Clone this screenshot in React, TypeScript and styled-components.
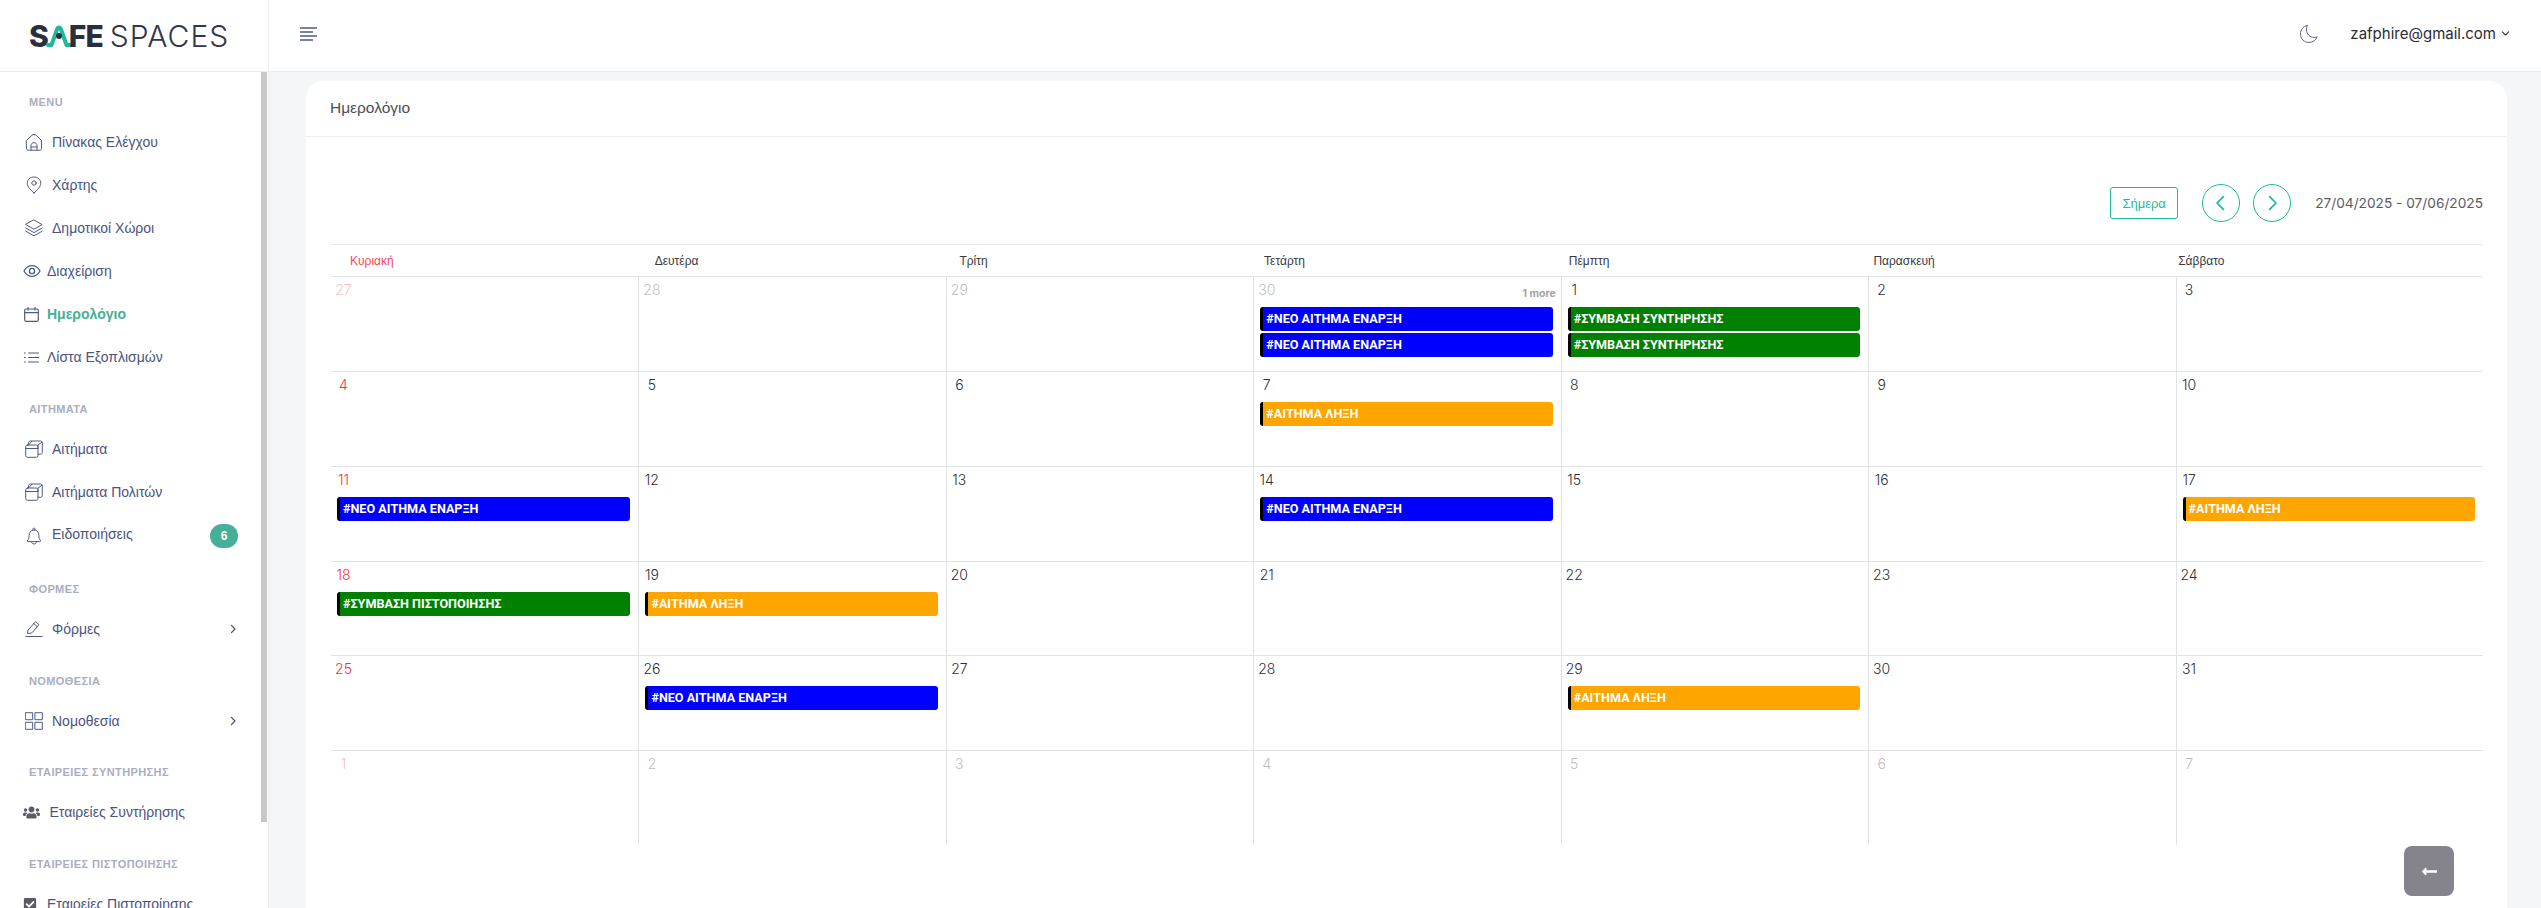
import React from "react";
import styled, { createGlobalStyle } from "styled-components";
import { FaUsers, FaCheckSquare, FaLongArrowAltLeft } from "react-icons/fa";

const Global = createGlobalStyle`
  html, body { margin: 0; padding: 0; height: 100%; overflow: hidden; background: #f5f6f8; }
  * { box-sizing: border-box; }
  #root { height: 100%; }
`;

const Page = styled.div`
  display: grid;
  grid-template-columns: 269px 1fr;
  height: 908px;
  overflow: hidden;
  font-family: "Liberation Sans", Arial, sans-serif;
`;

const Sidebar = styled.aside`
  position: relative;
  background: #fff;
  border-right: 1px solid #eceef2;
  height: 908px;
  overflow: hidden;
`;

const LogoBar = styled.div`
  height: 72px;
  border-bottom: 1px solid #e9ebef;
  display: flex;
  align-items: center;
  padding-left: 29px;
`;

const LogoBold = styled.span`
  font-family: Inter, sans-serif;
  font-weight: 800;
  font-size: 30px;
  line-height: 30px;
  color: #2b2e3f;
  letter-spacing: -1px;
`;

const LogoLight = styled.span`
  font-family: Inter, sans-serif;
  font-weight: 300;
  font-size: 30px;
  line-height: 30px;
  letter-spacing: 1px;
  color: #33364a;
  margin-left: 7px;
`;

const LogoMark = styled.svg`
  width: 28px;
  height: 25px;
  margin: -3px -4px 0 -3px;
  flex: none;
`;

const ScrollThumb = styled.div`
  position: absolute;
  top: 72px;
  right: 1px;
  width: 6px;
  height: 750px;
  background: #c8c8c8;
`;

const Nav = styled.nav`
  padding-top: 21px;
`;

const Section = styled.div`
  font-size: 11px;
  line-height: 18px;
  height: 18px;
  padding-left: 29px;
  color: #a9aebf;
  font-weight: 700;
  letter-spacing: 0.4px;
  margin-bottom: 9.5px;
  white-space: nowrap;
  & ~ & { margin-top: 21px; }
`;

const Item = styled.div<{ $tall?: boolean }>`
  display: flex;
  align-items: center;
  height: ${(p) => (p.$tall ? 46 : 43)}px;
  padding: 0 30px 0 0;
  color: #4a5480;
  font-size: 14px;
  white-space: nowrap;
`;

const IconSlot = styled.span<{ $left: number; $width: number }>`
  display: flex;
  align-items: center;
  flex: none;
  margin-left: ${(p) => p.$left}px;
  width: ${(p) => p.$width}px;
  color: #4f5a85;
  svg { display: block; }
`;

const ItemText = styled.span<{ $active?: boolean; $raised?: boolean }>`
  flex: 1;
  color: ${(p) => (p.$active ? "#45b097" : "#4a5480")};
  font-weight: ${(p) => (p.$active ? 700 : 400)};
  padding-bottom: ${(p) => (p.$raised ? 4 : 0)}px;
`;

const Badge = styled.span`
  width: 28px;
  height: 24px;
  border-radius: 12px;
  background: #45b097;
  color: #fff;
  font-size: 12px;
  font-weight: 700;
  display: flex;
  align-items: center;
  justify-content: center;
`;

const Main = styled.main`
  display: flex;
  flex-direction: column;
  min-width: 0;
`;

const TopBar = styled.header`
  height: 72px;
  flex: none;
  background: #fff;
  border-bottom: 1px solid #e9ebef;
  display: flex;
  align-items: center;
  padding: 0 31px 4px 31px;
`;

const Menu = styled.svg`
  width: 18px;
  height: 14px;
  color: #4f5a85;
`;

const Spacer = styled.div`
  flex: 1;
`;

const Moon = styled.svg`
  width: 20px;
  height: 20px;
  color: #59648f;
  margin-right: 31px;
`;

const Email = styled.span`
  font-family: Inter, sans-serif;
  font-size: 15px;
  color: #2b2b33;
  display: flex;
  align-items: center;
  gap: 5px;
`;

const Content = styled.div`
  padding: 9px 34px 0 37px;
`;

const Card = styled.section`
  background: #fff;
  border-radius: 18px 18px 0 0;
  height: 900px;
`;

const CardHead = styled.div`
  height: 56px;
  border-bottom: 1px solid #eceef1;
  display: flex;
  align-items: center;
  padding: 0 24px 2px;
  font-size: 15.5px;
  color: #495057;
`;

const CardBody = styled.div`
  padding: 47px 24px 0 25px;
`;

const Toolbar = styled.div`
  display: flex;
  align-items: center;
  justify-content: flex-end;
  height: 38px;
  margin-bottom: 22px;
`;

const TodayBtn = styled.button`
  width: 68px;
  height: 32px;
  border: 1px solid #1cbb9b;
  border-radius: 3px;
  background: #fff;
  color: #1cbb9b;
  font-family: "Liberation Sans", sans-serif;
  font-size: 13px;
  padding: 0;
  margin-right: 24px;
`;

const Circle = styled.button`
  width: 38px;
  height: 38px;
  border-radius: 50%;
  border: 1px solid #1cbb9b;
  background: #fff;
  color: #1cbb9b;
  padding: 0;
  display: flex;
  align-items: center;
  justify-content: center;
  margin-right: 13px;
  & + & { margin-right: 24px; }
`;

const Range = styled.span`
  font-family: Inter, sans-serif;
  font-size: 13.7px;
  color: #5b5b63;
  white-space: nowrap;
`;

const HeadRow = styled.div`
  display: grid;
  grid-template-columns: repeat(7, 304.7px);
  padding-left: 19px;
  height: 32px;
  border-top: 1px solid #e9ebef;
  align-items: center;
  font-size: 12px;
  color: #3a3a40;
`;

const HeadCell = styled.div<{ $sun?: boolean }>`
  color: ${(p) => (p.$sun ? "#f5475b" : "#3a3a40")};
`;

const Grid = styled.div`
  display: grid;
  grid-template-columns: repeat(7, 1fr);
  grid-template-rows: repeat(6, 1fr);
  height: 569px;
`;

const Cell = styled.div<{ $first?: boolean }>`
  border-top: 1px solid #e2e3e6;
  border-left: ${(p) => (p.$first ? "none" : "1px solid #e2e3e6")};
  min-width: 0;
`;

const DayRow = styled.div`
  display: flex;
  justify-content: space-between;
  height: 30px;
`;

const DayNum = styled.span<{ $sun?: boolean; $other?: boolean }>`
  width: 25px;
  text-align: center;
  font-family: Inter, sans-serif;
  font-size: 14px;
  font-weight: 300;
  line-height: 26px;
  color: ${(p) => (p.$sun ? "#f5303f" : "#2f2f36")};
  opacity: ${(p) => (p.$other ? 0.32 : 1)};
`;

const More = styled.span`
  font-family: Inter, sans-serif;
  font-size: 10.5px;
  font-weight: 700;
  color: #a4a4a8;
  margin: 10px 5px 0 0;
`;

const Events = styled.div`
  display: flex;
  flex-direction: column;
  gap: 2px;
  margin: 0 8px 0 6px;
`;

const Event = styled.div<{ $color: string }>`
  height: 24px;
  background: ${(p) => p.$color};
  border-left: 3px solid #000;
  border-radius: 3px;
  color: #fff;
  font-family: Roboto, sans-serif;
  font-weight: 700;
  font-size: 12.6px;
  line-height: 24px;
  padding-left: 3px;
  white-space: nowrap;
  overflow: hidden;
`;

const Foot = styled.div`
  display: flex;
  justify-content: flex-end;
  padding: 1px 29px 0 0;
`;

const BackBtn = styled.button`
  width: 50px;
  height: 50px;
  border: none;
  border-radius: 8px;
  background: #85838b;
  color: #fff;
  display: flex;
  align-items: center;
  justify-content: center;
  padding: 0;
`;

const L = (p: { children: React.ReactNode; w?: number; h?: number; vb?: string }) => (
  <svg
    width={p.w ?? 18}
    height={p.h ?? 18}
    viewBox={p.vb ?? "0 0 18 18"}
    fill="none"
    stroke="currentColor"
    strokeWidth={1}
    strokeLinecap="round"
    strokeLinejoin="round"
  >
    {p.children}
  </svg>
);

const Home = () => (
  <L>
    <path d="M1.5 7.500 7 2.200c1.200-1.100 2.800-1.100 4 0l5.500 5.300v8c0 1-.7 1.700-1.700 1.700H3.200c-1 0-1.700-.7-1.700-1.700z" />
    <path d="M6 17v-4.500C6 10.800 7.300 9.600 9 9.600s3 1.200 3 2.900V17" />
    <path d="M6 14h6" />
  </L>
);
const Pin = () => (
  <L>
    <path d="M9 17C5.500 13.700 2.200 10.800 2.200 7.200 2.200 3.500 5.200 1 9 1s6.800 2.500 6.800 6.200c0 3.600-3.300 6.500-6.800 9.800z" />
    <circle cx="9" cy="7" r="2.200" />
  </L>
);
const Layers = () => (
  <L>
    <path d="M9 1 17.200 5.600 9 10.200.8 5.600z" />
    <path d="M.8 9 9 13.600 17.200 9" />
    <path d="M.8 12.200 9 16.800l8.200-4.600" />
  </L>
);
const Eye = () => (
  <L>
    <path d="M1 9c2-3.600 4.800-5.400 8-5.400s6 1.800 8 5.400c-2 3.600-4.800 5.400-8 5.400S3 12.600 1 9z" strokeWidth={1.3} />
    <circle cx="9" cy="9" r="2.600" strokeWidth={1.3} />
  </L>
);
const Calendar = () => (
  <L w={15} h={15} vb="0 0 15 15">
    <rect x=".7" y="2" width="13.600" height="12.300" rx="1.200" strokeWidth={1.2} />
    <path d="M.7 5.600h13.600M4 .5v2.600M11 .5v2.600" strokeWidth={1.2} />
  </L>
);
const ListIcon = () => (
  <L w={15} h={11} vb="0 0 15 11">
    <path d="M4.500 1h10M4.500 5.500h10M4.500 10h10" strokeWidth={1.2} />
    <path d="M.5 1h.8M.5 5.500h.8M.5 10h.8" strokeWidth={1.2} />
  </L>
);
const Box = () => (
  <L>
    <rect x=".7" y="5" width="12.300" height="12.300" rx="1.800" />
    <path d="M.7 8.500h12.300M13 8.500V5.200" />
    <path d="M3.500 5V3c0-1.200.8-2 2-2h10c1 0 1.800.8 1.800 1.800v9.500c0 1.200-.8 2-2 2H13" />
    <path d="M4 4.600 6.800 1.300M13 5l4-2.800" />
  </L>
);
const Bell = () => (
  <L>
    <path d="M2.500 13.500c1-1.100 1.600-2.500 1.600-5C4.100 5.300 6 3 9 3s4.900 2.300 4.900 5.500c0 2.500.6 3.900 1.600 5 .4.600.1 1.100-.6 1.100H3.100c-.7 0-1-.5-.6-1.100z" />
    <path d="M8 2.800V2c0-.6.4-1 1-1s1 .4 1 1v.8M6.500 14.800c.2 1.400 1.200 2.200 2.500 2.200s2.300-.8 2.500-2.200" />
  </L>
);
const Pen = () => (
  <L>
    <path d="M3.300 9.800 10.600 1.600l3.400 3-6.400 7.600c-.4.500-1 .8-1.600.9l-3.300.5.1-2.600c0-.5.2-.9.5-1.200z" />
    <path d="M8.800 3.600 12.400 6.800" />
    <path d="M.8 16.500h16.400" />
  </L>
);
const Tiles = () => (
  <L>
    <rect x=".7" y=".7" width="7" height="7" />
    <rect x="10.300" y=".7" width="7" height="7" />
    <rect x=".7" y="10.300" width="7" height="7" />
    <rect x="10.300" y="10.300" width="7" height="7" />
  </L>
);
const Chev = (p: { d: string; size?: number; w?: number }) => (
  <svg width={p.size ?? 10} height={p.size ?? 10} viewBox="0 0 10 10" fill="none" stroke="currentColor" strokeWidth={p.w ?? 1.2} strokeLinecap="round" strokeLinejoin="round">
    <path d={p.d} />
  </svg>
);

type ItemDef = { label: string; icon: React.ReactNode; left: number; width: number; active?: boolean; badge?: string; arrow?: boolean };
type Group = { title: string; items: ItemDef[] };

const groups: Group[] = [
  {
    title: "MENU",
    items: [
      { label: "Πίνακας Ελέγχου", icon: <Home />, left: 25, width: 27 },
      { label: "Χάρτης", icon: <Pin />, left: 25, width: 27 },
      { label: "Δημοτικοί Χώροι", icon: <Layers />, left: 25, width: 27 },
      { label: "Διαχείριση", icon: <Eye />, left: 23, width: 24 },
      { label: "Ημερολόγιο", icon: <Calendar />, left: 24, width: 23, active: true },
      { label: "Λίστα Εξοπλισμών", icon: <ListIcon />, left: 24, width: 23 },
    ],
  },
  {
    title: "ΑΙΤΗΜΑΤΑ",
    items: [
      { label: "Αιτήματα", icon: <Box />, left: 25, width: 27 },
      { label: "Αιτήματα Πολιτών", icon: <Box />, left: 25, width: 27 },
      { label: "Ειδοποιήσεις", icon: <Bell />, left: 25, width: 27, badge: "6" },
    ],
  },
  { title: "ΦΟΡΜΕΣ", items: [{ label: "Φόρμες", icon: <Pen />, left: 25, width: 27, arrow: true }] },
  { title: "ΝΟΜΟΘΕΣΙΑ", items: [{ label: "Νομοθεσία", icon: <Tiles />, left: 25, width: 27, arrow: true }] },
  {
    title: "ΕΤΑΙΡΕΙΕΣ ΣΥΝΤΗΡΗΣΗΣ",
    items: [{ label: "Εταιρείες Συντήρησης", icon: <FaUsers size={17} color="#5c5c66" />, left: 23, width: 26.5 }],
  },
  {
    title: "ΕΤΑΙΡΕΙΕΣ ΠΙΣΤΟΠΟΙΗΣΗΣ",
    items: [{ label: "Εταιρείες Πιστοποίησης", icon: <FaCheckSquare size={14} color="#5c5c66" />, left: 23, width: 24 }],
  },
];

const NEW = { t: "#ΝΕΟ ΑΙΤΗΜΑ ΕΝΑΡΞΗ", c: "#0000ff" };
const CON = { t: "#ΣΥΜΒΑΣΗ ΣΥΝΤΗΡΗΣΗΣ", c: "#008000" };
const END = { t: "#ΑΙΤΗΜΑ ΛΗΞΗ", c: "#ffa500" };
const CERT = { t: "#ΣΥΜΒΑΣΗ ΠΙΣΤΟΠΟΙΗΣΗΣ", c: "#008000" };

const days = ["Κυριακή", "Δευτέρα", "Τρίτη", "Τετάρτη", "Πέμπτη", "Παρασκευή", "Σάββατο"];

type CellDef = { n: number; other?: boolean; more?: string; ev?: { t: string; c: string }[] };
const cells: CellDef[] = [
  { n: 27, other: true }, { n: 28, other: true }, { n: 29, other: true },
  { n: 30, other: true, more: "1 more", ev: [NEW, NEW] },
  { n: 1, ev: [CON, CON] }, { n: 2 }, { n: 3 },
  { n: 4 }, { n: 5 }, { n: 6 }, { n: 7, ev: [END] }, { n: 8 }, { n: 9 }, { n: 10 },
  { n: 11, ev: [NEW] }, { n: 12 }, { n: 13 }, { n: 14, ev: [NEW] }, { n: 15 }, { n: 16 }, { n: 17, ev: [END] },
  { n: 18, ev: [CERT] }, { n: 19, ev: [END] }, { n: 20 }, { n: 21 }, { n: 22 }, { n: 23 }, { n: 24 },
  { n: 25 }, { n: 26, ev: [NEW] }, { n: 27 }, { n: 28 }, { n: 29, ev: [END] }, { n: 30 }, { n: 31 },
  { n: 1, other: true }, { n: 2, other: true }, { n: 3, other: true }, { n: 4, other: true },
  { n: 5, other: true }, { n: 6, other: true }, { n: 7, other: true },
];

export default function App() {
  return (
    <>
      <Global />
      <Page>
        <Sidebar>
          <LogoBar>
            <LogoBold>S</LogoBold>
            <LogoMark viewBox="0 0 28 25" fill="none">
              <path d="M3 23h3.500L12 7.500c1-2.600 3-2.600 4 0L21.500 23H25" stroke="#1fb89a" strokeWidth={4} strokeLinecap="round" strokeLinejoin="round" />
              <circle cx="14" cy="14" r="3" fill="#2b2e3f" />
            </LogoMark>
            <LogoBold>FE</LogoBold>
            <LogoLight>SPACES</LogoLight>
          </LogoBar>
          <Nav>
            {groups.map((g) => (
              <React.Fragment key={g.title}>
                <Section>{g.title}</Section>
                {g.items.map((it) => (
                  <Item key={it.label} $tall={!!it.badge}>
                    <IconSlot $left={it.left} $width={it.width}>{it.icon}</IconSlot>
                    <ItemText $active={it.active} $raised={!!it.badge}>{it.label}</ItemText>
                    {it.badge && <Badge>{it.badge}</Badge>}
                    {it.arrow && <Chev d="M3.500 1.500 7 5 3.500 8.500" />}
                  </Item>
                ))}
              </React.Fragment>
            ))}
          </Nav>
          <ScrollThumb />
        </Sidebar>
        <Main>
          <TopBar>
            <Menu viewBox="0 0 18 14" fill="none" stroke="currentColor" strokeWidth={1.3}>
              <path d="M0 1h17M0 5h13M0 9h17M0 13h13" />
            </Menu>
            <Spacer />
            <Moon viewBox="0 0 20 20" fill="none" stroke="currentColor" strokeWidth={1} strokeLinecap="round" strokeLinejoin="round">
              <path d="M8 1.500C4 2.500 1.500 5.800 1.500 10c0 4.800 3.800 8.500 8.500 8.500 3.800 0 7-2.400 8.200-5.800-1 .6-2 .8-3.200.8C10.800 13.500 7.500 10 7.500 6c0-1.600.2-3.100.5-4.500z" />
            </Moon>
            <Email>
              zafphire@gmail.com
              <Chev d="M1.500 3.200 5 6.700l3.500-3.500" size={9} />
            </Email>
          </TopBar>
          <Content>
            <Card>
              <CardHead>Ημερολόγιο</CardHead>
              <CardBody>
                <Toolbar>
                  <TodayBtn>Σήμερα</TodayBtn>
                  <Circle><Chev d="M6.500 1 2.500 5l4 4" size={16} w={1.1} /></Circle>
                  <Circle><Chev d="M3.500 1 7.500 5l-4 4" size={16} w={1.1} /></Circle>
                  <Range>27/04/2025 - 07/06/2025</Range>
                </Toolbar>
                <HeadRow>
                  {days.map((d, i) => (
                    <HeadCell key={d} $sun={i === 0}>{d}</HeadCell>
                  ))}
                </HeadRow>
                <Grid>
                  {cells.map((c, i) => (
                    <Cell key={i} $first={i % 7 === 0}>
                      <DayRow>
                        <DayNum $sun={i % 7 === 0} $other={c.other}>{c.n}</DayNum>
                        {c.more && <More>{c.more}</More>}
                      </DayRow>
                      {c.ev && (
                        <Events>
                          {c.ev.map((e, k) => (
                            <Event key={k} $color={e.c}>{e.t}</Event>
                          ))}
                        </Events>
                      )}
                    </Cell>
                  ))}
                </Grid>
                <Foot>
                  <BackBtn><FaLongArrowAltLeft size={17} /></BackBtn>
                </Foot>
              </CardBody>
            </Card>
          </Content>
        </Main>
      </Page>
    </>
  );
}
